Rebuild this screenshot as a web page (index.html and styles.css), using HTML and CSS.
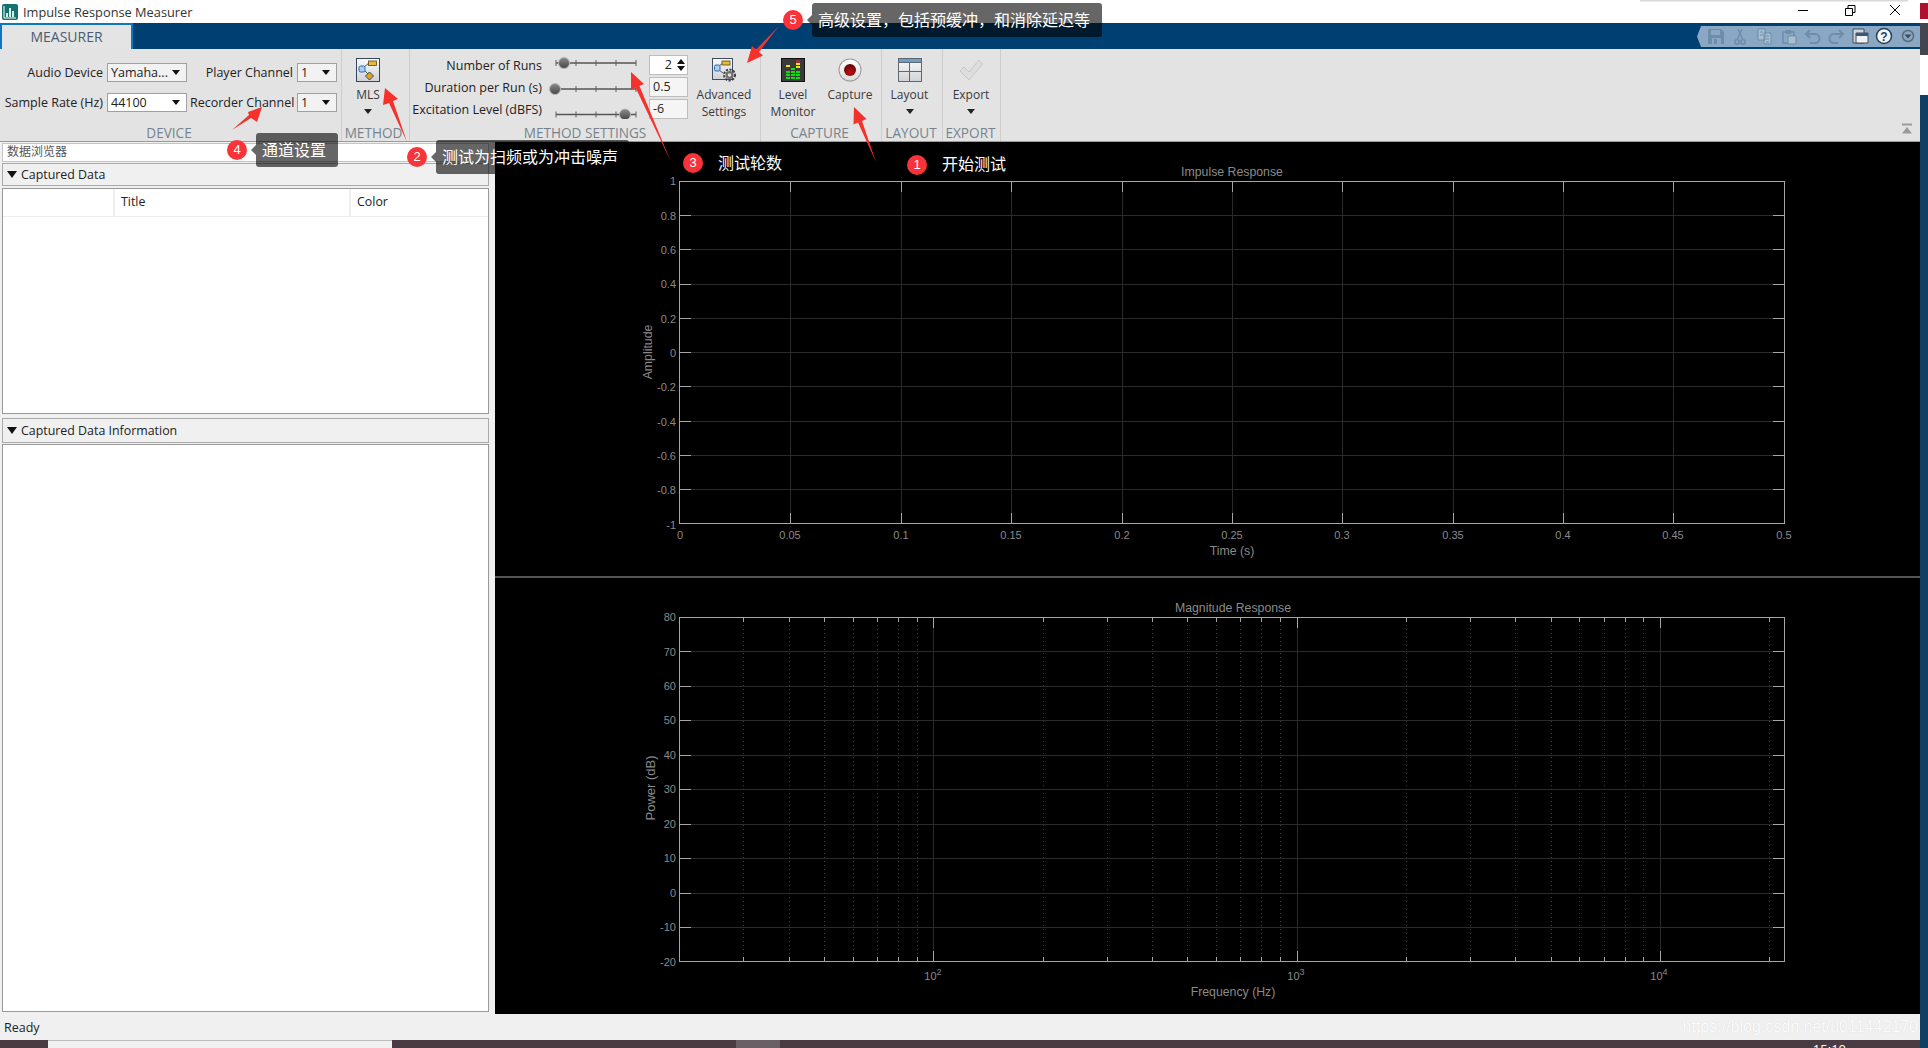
FILE: index.html
```html
<!DOCTYPE html>
<html lang="en">
<head>
  <meta charset="UTF-8" />
  <title>Impulse Response Measurer</title>
  <link rel="stylesheet" href="styles.css">
</head>
<body>
<div class="page">
  <div class="window">

    <div class="titlebar">
      <svg class="app-icon" viewBox="0 0 16 16">
        <rect width="16" height="16" rx="2" fill="#14736c"/>
        <path d="M2 2v12h12" fill="none" stroke="#fff"/>
        <path d="M4 13V9h2v4zM7 13V4h2v9zM10 13V7h2v6z" fill="#d8f0ec"/>
      </svg>
      <span class="app-title">Impulse Response Measurer</span>
      <div class="win-controls">
        <svg viewBox="0 0 46 23"><path d="M18 10.5h10" stroke="#000" fill="none"/></svg>
        <svg viewBox="0 0 46 23"><path d="M19.5 8.5h7v7h-7zM22 8V5.5h7v7h-2.500" stroke="#000" fill="none"/></svg>
        <svg viewBox="0 0 46 23"><path d="M18 5l10 10M28 5L18 15" stroke="#000" fill="none"/></svg>
      </div>
    </div>

    <div class="tabstrip">
      <div class="tab">MEASURER</div>
      <div class="quick-bar">
        <svg viewBox="1697 26 223 21" width="223" height="21">
          <path d="M1708 29h13l3 3v12h-16z" fill="#6d8dab"/>
          <path d="M1711 30h9v5h-9zM1712 38h9v6h-9z" fill="#8aa8c4"/>
          <path d="M1714 39h3v5h-3z" fill="#6d8dab"/>
          <g fill="none" stroke="#6d8dab" stroke-width="1.500">
            <path d="M1737 40l5-11M1743 40l-5-11"/>
            <circle cx="1737" cy="42" r="2.200"/><circle cx="1743" cy="42" r="2.200"/>
            <path d="M1783 32h11v11h-11z"/>
            <path d="M1810 30l-4 4 4 4M1806 34h9a4 4 0 0 1 0 9h-5" stroke-width="2"/>
            <path d="M1839 30l4 4-4 4M1843 34h-9a4 4 0 0 0 0 9h4" stroke-width="2"/>
          </g>
          <path d="M1758 29h7v11h-7zM1764 33h7v11h-7z" fill="#a9bed2" stroke="#6d8dab"/>
          <path d="M1760 32h3M1760 35h3M1766 36h3M1766 39h3M1766 42h3" stroke="#6d8dab" fill="none"/>
          <path d="M1786 30h5v4h-5z" fill="#6d8dab"/>
          <path d="M1788 36h8v8h-8z" fill="#a9bed2" stroke="#6d8dab"/>
          <path d="M1853 29h11v14h-11z" fill="#ccd6e0" stroke="#444c54"/>
          <path d="M1856 33h12v10h-12z" fill="#eef2f6" stroke="#444c54"/>
          <path d="M1856 33h12v3h-12z" fill="#39597a"/>
          <circle cx="1884" cy="36" r="7.500" fill="#f4f6fa" stroke="#24405f" stroke-width="1.500"/>
          <text x="1884" y="40.500" class="help-mark">?</text>
          <circle cx="1908" cy="36" r="5.500" fill="none" stroke="#5b6a78" stroke-width="1.500"/>
          <path d="M1904.500 34.500h7l-3.500 4z" fill="#3e4a56"/>
        </svg>
      </div>
    </div>

    <div class="ribbon">
      <div class="group group-device">
        <div class="device-grid">
          <span class="field-label">Audio Device</span>
          <div class="combo combo-grey">Yamaha...</div>
          <span class="field-label">Player Channel</span>
          <div class="combo combo-grey">1</div>
          <span class="field-label">Sample Rate (Hz)</span>
          <div class="combo">44100</div>
          <span class="field-label">Recorder Channel</span>
          <div class="combo combo-grey">1</div>
        </div>
        <div class="group-label">DEVICE</div>
      </div>

      <div class="group group-method">
        <div class="tall-row">
          <div class="tall-btn btn-mls">
            <svg class="tall-icon" viewBox="0 0 24 24">
              <defs>
                <linearGradient id="paperGrad" x1="0" y1="0" x2="0" y2="1">
                  <stop offset="0" stop-color="#fafafa"/><stop offset="1" stop-color="#cfd2d6"/>
                </linearGradient>
                <linearGradient id="thumbGrad" x1="0" y1="0" x2="0" y2="1">
                  <stop offset="0" stop-color="#8c8c8c"/><stop offset="1" stop-color="#454545"/>
                </linearGradient>
              </defs>
              <rect x=".5" y=".5" width="23" height="23" fill="url(#paperGrad)" stroke="#34465a"/>
              <path d="M8 9l5-4M8 12l5 5" stroke="#4e5a66" fill="none"/>
              <rect x="12.500" y="3" width="8" height="4.500" fill="#e9b935" stroke="#5a4a16" stroke-width=".8"/>
              <rect x="3" y="8" width="6" height="6" rx="1.500" fill="#a8cdf0" stroke="#2f6aa8"/>
              <path d="M13.500 14l4 4-4 4-4-4z" fill="#e6a21c" stroke="#2d4a66"/>
            </svg>
            <span class="tall-text">MLS</span>
            <span class="drop-arrow"></span>
          </div>
        </div>
        <div class="group-label">METHOD</div>
      </div>

      <div class="group group-settings">
        <div class="tall-row">
          <div class="settings-grid">
            <span class="field-label">Number of Runs</span>
            <svg class="slider" viewBox="0 0 107 20">
              <path class="slider-track" d="M14 8h80"/>
              <path class="slider-ticks" d="M14 5v6M34 5v6M54 5v6M74 5v6M94 5v6"/>
              <circle class="slider-thumb" cx="22" cy="8" r="5.500"/>
            </svg>
            <div class="spin-box">2<span class="spin-arrows"></span></div>

            <span class="field-label">Duration per Run (s)</span>
            <svg class="slider" viewBox="0 0 107 20">
              <path class="slider-track" d="M14 12h80"/>
              <path class="slider-ticks" d="M34 9v6M54 9v6M74 9v6M94 9v6"/>
              <circle class="slider-thumb" cx="13" cy="12" r="5.500"/>
            </svg>
            <div class="text-box">0.5</div>

            <span class="field-label">Excitation Level (dBFS)</span>
            <svg class="slider" viewBox="0 0 107 20">
              <path class="slider-track" d="M14 15.500h80"/>
              <path class="slider-ticks" d="M14 12.500v6M34 12.500v6M54 12.500v6M74 12.500v6M94 12.500v6"/>
              <circle class="slider-thumb" cx="83" cy="15.500" r="5.500"/>
            </svg>
            <div class="text-box">-6</div>
          </div>
          <div class="tall-btn btn-advanced">
            <svg class="tall-icon" viewBox="0 0 24 24">
              <rect x=".5" y=".5" width="20" height="21" fill="url(#paperGrad)" stroke="#3f4f60"/>
              <path d="M7 8l4-3M7 12l4 3" stroke="#4e5a66" fill="none"/>
              <rect x="10" y="3" width="8" height="4" fill="#e9b935" stroke="#5a4a16" stroke-width=".8"/>
              <rect x="2.500" y="7" width="5.500" height="6" rx="1.500" fill="#a8cdf0" stroke="#2f6aa8"/>
              <circle cx="17.500" cy="17" r="5.500" fill="none" stroke="#3f3f3f" stroke-width="2" stroke-dasharray="2.200 1.400"/>
              <circle cx="17.500" cy="17" r="4" fill="#6f6f6f"/>
              <circle cx="17.500" cy="17" r="1.800" fill="#e4e4e4"/>
            </svg>
            <span class="tall-text">Advanced</span>
            <span class="tall-text">Settings</span>
          </div>
        </div>
        <div class="group-label">METHOD SETTINGS</div>
      </div>

      <div class="group group-capture">
        <div class="tall-row">
          <div class="tall-btn btn-level">
            <svg class="tall-icon" viewBox="0 0 24 24">
              <rect x=".5" y=".5" width="23" height="23" fill="#3a3a3a" stroke="#111"/>
              <path d="M5 14h4M5 17h4M5 20h4M10 11h4M10 14h4M10 17h4M10 20h4M15 14h4M15 17h4M15 20h4" stroke="#0be00b" stroke-width="2.200" fill="none"/>
              <path d="M5 8h4M15 6h4M15 9h4" stroke="#f2e418" stroke-width="2.200" fill="none"/>
              <path d="M15 3.500h4" stroke="#e0201c" stroke-width="2.200" fill="none"/>
            </svg>
            <span class="tall-text">Level</span>
            <span class="tall-text">Monitor</span>
          </div>
          <div class="tall-btn btn-capture">
            <svg class="tall-icon" viewBox="0 0 24 24">
              <defs>
                <linearGradient id="capGrad" x1="0" y1="0" x2="0" y2="1">
                  <stop offset="0" stop-color="#ffffff"/><stop offset="1" stop-color="#dcdcdc"/>
                </linearGradient>
                <radialGradient id="capDot" cx=".5" cy=".7" r=".7">
                  <stop offset="0" stop-color="#c40f14"/><stop offset="1" stop-color="#5a0508"/>
                </radialGradient>
              </defs>
              <circle cx="12" cy="12" r="11.500" fill="#9a9a9a"/>
              <circle cx="12" cy="12" r="10.500" fill="url(#capGrad)"/>
              <circle cx="12" cy="12" r="6" fill="url(#capDot)"/>
            </svg>
            <span class="tall-text">Capture</span>
          </div>
        </div>
        <div class="group-label">CAPTURE</div>
      </div>

      <div class="group group-layout">
        <div class="tall-row">
          <div class="tall-btn btn-layout">
            <svg class="tall-icon" viewBox="0 0 24 24">
              <rect x=".5" y=".5" width="23" height="23" fill="url(#paperGrad)" stroke="#5f6870"/>
              <rect x="1" y="1" width="22" height="3.500" fill="#6d9fc6"/>
              <path d="M1 4.500h22M11.500 5v18M1 13.500h22" stroke="#5f6870" fill="none"/>
            </svg>
            <span class="tall-text">Layout</span>
            <span class="drop-arrow"></span>
          </div>
        </div>
        <div class="group-label">LAYOUT</div>
      </div>

      <div class="group group-export">
        <div class="tall-row">
          <div class="tall-btn btn-export">
            <svg class="tall-icon" viewBox="0 0 24 24">
              <path d="M1 13l4-4 5 5L20 2l3.500 4L10 22z" fill="#dedede" stroke="#c6c6c6"/>
            </svg>
            <span class="tall-text">Export</span>
            <span class="drop-arrow"></span>
          </div>
        </div>
        <div class="group-label">EXPORT</div>
      </div>

      <div class="ribbon-collapse">
        <svg viewBox="0 0 12 11" width="12" height="11"><path d="M1 .5h10v2H1zM6 4l5 6.500H1z" fill="#9b9b9b"/></svg>
      </div>
    </div>

    <div class="main">
      <div class="browser">
        <div class="browser-title">数据浏览器</div>
        <div class="section-head"><span class="section-arrow"></span>Captured Data</div>
        <div class="data-table">
          <div class="table-head">
            <div class="col col-blank"></div>
            <div class="col col-title">Title</div>
            <div class="col col-color">Color</div>
          </div>
        </div>
        <div class="section-head section-info"><span class="section-arrow"></span>Captured Data Information</div>
        <div class="info-panel"></div>
      </div>

      <div class="plots">
        <svg class="plot plot-top" viewBox="495 142 1425 434">
          <path class="grid" d="M790.500 181V524M901.500 181V524M1011.500 181V524M1122.500 181V524M1232.500 181V524M1342.500 181V524M1453.500 181V524M1563.500 181V524M1673.500 181V524M680 215.500H1784M680 249.500H1784M680 284.500H1784M680 318.500H1784M680 352.500H1784M680 386.500H1784M680 421.500H1784M680 455.500H1784M680 489.500H1784"/>
          <path class="tick" d="M790.500 181v11M901.500 181v11M1011.500 181v11M1122.500 181v11M1232.500 181v11M1342.500 181v11M1453.500 181v11M1563.500 181v11M1673.500 181v11M790.500 524v-11M901.500 524v-11M1011.500 524v-11M1122.500 524v-11M1232.500 524v-11M1342.500 524v-11M1453.500 524v-11M1563.500 524v-11M1673.500 524v-11M680 215.500h11M680 249.500h11M680 284.500h11M680 318.500h11M680 352.500h11M680 386.500h11M680 421.500h11M680 455.500h11M680 489.500h11M1784 215.500h-11M1784 249.500h-11M1784 284.500h-11M1784 318.500h-11M1784 352.500h-11M1784 386.500h-11M1784 421.500h-11M1784 455.500h-11M1784 489.500h-11"/>
          <rect class="axes" x="679.500" y="181.500" width="1105" height="342"/>
          <text class="plot-title" x="1232" y="176">Impulse Response</text>
          <g class="y-labels">
            <text x="676" y="185">1</text><text x="676" y="220">0.8</text><text x="676" y="254">0.6</text>
            <text x="676" y="288">0.4</text><text x="676" y="323">0.2</text><text x="676" y="357">0</text>
            <text x="676" y="391">-0.2</text><text x="676" y="426">-0.4</text><text x="676" y="460">-0.6</text>
            <text x="676" y="494">-0.8</text><text x="676" y="529">-1</text>
          </g>
          <g class="x-labels">
            <text x="680" y="539">0</text><text x="790" y="539">0.05</text><text x="901" y="539">0.1</text>
            <text x="1011" y="539">0.15</text><text x="1122" y="539">0.2</text><text x="1232" y="539">0.25</text>
            <text x="1342" y="539">0.3</text><text x="1453" y="539">0.35</text><text x="1563" y="539">0.4</text>
            <text x="1673" y="539">0.45</text><text x="1784" y="539">0.5</text>
          </g>
          <text class="axis-name" x="1232" y="555">Time (s)</text>
          <text class="axis-name" transform="translate(652 352) rotate(-90)">Amplitude</text>
        </svg>

        <div class="plot-divider"></div>

        <svg class="plot plot-bottom" viewBox="495 578 1425 436">
          <path class="grid" d="M933.500 617V962M1297.500 617V962M1660.500 617V962M680 651.500H1784M680 686.500H1784M680 720.500H1784M680 755.500H1784M680 789.500H1784M680 824.500H1784M680 858.500H1784M680 893.500H1784M680 927.500H1784"/>
          <path class="grid-minor" d="M743.500 617V962M789.500 617V962M824.500 617V962M853.500 617V962M877.500 617V962M898.500 617V962M917.500 617V962M1043.500 617V962M1107.500 617V962M1152.500 617V962M1187.500 617V962M1216.500 617V962M1240.500 617V962M1261.500 617V962M1280.500 617V962M1406.500 617V962M1470.500 617V962M1515.500 617V962M1551.500 617V962M1579.500 617V962M1604.500 617V962M1625.500 617V962M1643.500 617V962M1769.500 617V962"/>
          <path class="tick" d="M743.500 617v5M789.500 617v5M824.500 617v5M853.500 617v5M877.500 617v5M898.500 617v5M917.500 617v5M1043.500 617v5M1107.500 617v5M1152.500 617v5M1187.500 617v5M1216.500 617v5M1240.500 617v5M1261.500 617v5M1280.500 617v5M1406.500 617v5M1470.500 617v5M1515.500 617v5M1551.500 617v5M1579.500 617v5M1604.500 617v5M1625.500 617v5M1643.500 617v5M1769.500 617v5M743.500 962v-5M789.500 962v-5M824.500 962v-5M853.500 962v-5M877.500 962v-5M898.500 962v-5M917.500 962v-5M1043.500 962v-5M1107.500 962v-5M1152.500 962v-5M1187.500 962v-5M1216.500 962v-5M1240.500 962v-5M1261.500 962v-5M1280.500 962v-5M1406.500 962v-5M1470.500 962v-5M1515.500 962v-5M1551.500 962v-5M1579.500 962v-5M1604.500 962v-5M1625.500 962v-5M1643.500 962v-5M1769.500 962v-5M933.500 617v11M1297.500 617v11M1660.500 617v11M933.500 962v-11M1297.500 962v-11M1660.500 962v-11M680 651.500h11M680 686.500h11M680 720.500h11M680 755.500h11M680 789.500h11M680 824.500h11M680 858.500h11M680 893.500h11M680 927.500h11M1784 651.500h-11M1784 686.500h-11M1784 720.500h-11M1784 755.500h-11M1784 789.500h-11M1784 824.500h-11M1784 858.500h-11M1784 893.500h-11M1784 927.500h-11"/>
          <rect class="axes" x="679.500" y="617.500" width="1105" height="344"/>
          <text class="plot-title" x="1233" y="612">Magnitude Response</text>
          <g class="y-labels">
            <text x="676" y="621">80</text><text x="676" y="656">70</text><text x="676" y="690">60</text>
            <text x="676" y="724">50</text><text x="676" y="759">40</text><text x="676" y="793">30</text>
            <text x="676" y="828">20</text><text x="676" y="862">10</text><text x="676" y="897">0</text>
            <text x="676" y="931">-10</text><text x="676" y="966">-20</text>
          </g>
          <g class="x-labels">
            <text x="933" y="980">10<tspan class="exp" dy="-5">2</tspan></text>
            <text x="1296" y="980">10<tspan class="exp" dy="-5">3</tspan></text>
            <text x="1659" y="980">10<tspan class="exp" dy="-5">4</tspan></text>
          </g>
          <text class="axis-name" x="1233" y="996">Frequency (Hz)</text>
          <text class="axis-name axis-wide" transform="translate(655 788) rotate(-90)">Power (dB)</text>
        </svg>
      </div>
    </div>

    <div class="statusbar">
      <span class="status-text">Ready</span>
      <span class="watermark">https://blog.csdn.net/u011442170</span>
    </div>

    <div class="taskbar">
      <div class="task-gap-a"></div>
      <div class="task-search"></div>
      <div class="task-gap-b"></div>
      <div class="task-active"></div>
      <div class="task-clock">15:10</div>
    </div>
  </div>
  <div class="desktop-edge"></div>

  <!-- annotations drawn on top of the screenshot -->
  <svg class="arrows" viewBox="0 0 1928 1048">
    <polygon points="232,130 251,118 257,122 262,107 248,112 249,115"/>
    <polygon points="407,142 393,101 398,99 385,88 383,105 389,103"/>
    <polygon points="671,162 639.500,86 644,84 631,72 631,89.500 635.500,87.500"/>
    <polygon points="876,162 862,121 866.500,119 854,107 853.500,124.500 858,122.500"/>
    <polygon points="779,26 759,52 763,55.500 747,63 752,46 756,49.500"/>
  </svg>

  <div class="badge badge-1">1</div>
  <div class="note note-1">开始测试</div>
  <div class="badge badge-2">2</div>
  <div class="note note-2">测试为扫频或为冲击噪声</div>
  <div class="badge badge-3">3</div>
  <div class="note note-3">测试轮数</div>
  <div class="badge badge-4">4</div>
  <div class="note note-4">通道设置</div>
  <div class="badge badge-5">5</div>
  <div class="note note-5">高级设置，包括预缓冲，和消除延迟等</div>
</div>
</body>
</html>
```
FILE: styles.css
```css
* {
  box-sizing: border-box;
}
body {
  margin: 0;
  font-family: "Open Sans", "Noto Sans CJK SC", sans-serif;
  font-size: 12px;
  color: #222;
  overflow: hidden;
}
.page {
  position: relative;
  display: flex;
  width: 1928px;
  height: 1048px;
  overflow: hidden;
}
.window {
  display: flex;
  flex-direction: column;
  width: 1920px;
  height: 1048px;
  background-color: #f0f0f0;
}
.desktop-edge {
  width: 8px;
  background: linear-gradient(to bottom, #fff 0 3px, #b01030 3px 19px, #fff 19px 23px, #454550 23px 55px, #fff 55px 95px, #0f3f63 95px);
}

/* title bar */
.titlebar {
  position: relative;
  display: flex;
  align-items: center;
  height: 23px;
  background-color: #fff;
}
.titlebar::before {
  content: "";
  position: absolute;
  left: 1640px;
  top: 0;
  width: 268px;
  height: 2px;
  background: linear-gradient(to bottom, #d0d0d0, #f4f4f4);
}
.app-icon {
  width: 16px;
  height: 16px;
  margin-left: 2px;
}
.app-title {
  margin-left: 5px;
  font-size: 12.8px;
  color: #333;
}
.win-controls {
  display: flex;
  margin-left: auto;
  padding-right: 2px;
}
.win-controls svg {
  width: 46px;
  height: 23px;
}

/* tab strip */
.tabstrip {
  display: flex;
  align-items: flex-start;
  justify-content: space-between;
  height: 26px;
  background-color: #003f72;
}
.tab {
  width: 133px;
  height: 26px;
  padding-top: 1px;
  border: 2px solid #0d78c0;
  border-bottom: 0;
  background-color: #e4e4e4;
  color: #4b5b70;
  font-size: 14px;
  line-height: 21px;
  text-align: center;
}
.quick-bar {
  width: 223px;
  height: 21px;
  margin-top: 3px;
  background-color: #8aa8c4;
  clip-path: polygon(0 50%, 4px 0, 100% 0, 100% 100%, 4px 100%);
}
.quick-bar svg {
  display: block;
}
.help-mark {
  font-family: "Liberation Sans", sans-serif;
  font-size: 12px;
  font-weight: bold;
  fill: #24405f;
  text-anchor: middle;
}

/* ribbon */
.ribbon {
  display: flex;
  height: 93px;
  border-bottom: 1px solid #9a9a9a;
  background-color: #e3e3e3;
}
.group {
  position: relative;
  display: flex;
  flex-direction: column;
  justify-content: space-between;
  height: 92px;
  border-right: 1px solid #cdcdcd;
}
.group-device { width: 342px; }
.group-method { width: 68px; }
.group-settings { width: 351px; }
.group-capture { width: 121px; }
.group-layout { width: 61px; }
.group-export { width: 58px; }
.group-label {
  height: 16px;
  color: #76838f;
  font-size: 13.600px;
  line-height: 15px;
  text-align: center;
  white-space: nowrap;
}
.group-device .group-label { width: 338px; }
.group-method .group-label { padding-right: 4px; }
.group-capture .group-label { padding-right: 3px; }
.group-layout .group-label { padding-right: 2px; }
.group-export .group-label { padding-right: 2px; }
.device-grid {
  display: grid;
  grid-template-columns: 104px 80px 104px 40px;
  grid-auto-rows: 19px;
  column-gap: 3px;
  row-gap: 11px;
  padding-top: 14px;
}
.field-label {
  padding-right: 1px;
  font-size: 12.500px;
  line-height: 19px;
  text-align: right;
  white-space: nowrap;
}
.combo {
  position: relative;
  padding-left: 3px;
  border: 1px solid #a0a0a0;
  background-color: #fff;
  font-size: 12.500px;
  line-height: 17px;
}
.combo-grey {
  background-color: #f2f2f2;
}
.combo::after {
  content: "";
  position: absolute;
  right: 6px;
  top: 6px;
  border-top: 5px solid #111;
  border-left: 4px solid transparent;
  border-right: 4px solid transparent;
}
.tall-row {
  display: flex;
  padding-top: 9px;
}
.tall-btn {
  display: flex;
  flex-direction: column;
  align-items: center;
}
.tall-icon {
  display: block;
  width: 24px;
  height: 24px;
  margin-bottom: 4px;
}
.tall-text {
  height: 17px;
  color: #3a3a3a;
  font-size: 12px;
  line-height: 17px;
  white-space: nowrap;
}
.drop-arrow {
  width: 0;
  height: 0;
  margin-top: 6px;
  border-top: 5px solid #222;
  border-left: 4px solid transparent;
  border-right: 4px solid transparent;
}
.btn-mls { width: 52px; }
.btn-advanced { width: 72px; }
.btn-level { width: 64px; }
.btn-capture { width: 50px; }
.btn-layout { width: 55px; }
.btn-export { width: 56px; }
.settings-grid {
  display: grid;
  grid-template-columns: 133px 106px 39px;
  grid-auto-rows: 20px;
  row-gap: 2px;
  margin-top: -3px;
}
.settings-grid .field-label {
  line-height: 21px;
}
.slider {
  display: block;
  width: 107px;
  height: 20px;
  margin-left: -1px;
}
.slider-track {
  stroke: #555;
  stroke-width: 1.500;
  fill: none;
}
.slider-ticks {
  stroke: #5f5f5f;
  fill: none;
}
.slider-thumb {
  fill: url(#thumbGrad);
  stroke: #b9b9b9;
}
.text-box,
.spin-box {
  position: relative;
  padding-left: 3px;
  border: 1px solid #bdbdbd;
  background-color: #f5f5f5;
  font-size: 12.500px;
  line-height: 18px;
}
.spin-box {
  padding-right: 15px;
  background-color: #fff;
  text-align: right;
}
.spin-arrows::before,
.spin-arrows::after {
  content: "";
  position: absolute;
  right: 2px;
  border-left: 4px solid transparent;
  border-right: 4px solid transparent;
}
.spin-arrows::before {
  top: 3px;
  border-bottom: 5px solid #111;
}
.spin-arrows::after {
  bottom: 3px;
  border-top: 5px solid #111;
}
.ribbon-collapse {
  align-self: flex-end;
  margin-left: auto;
  margin-right: 7px;
  margin-bottom: 7px;
  line-height: 0;
}

/* main area */
.main {
  display: flex;
  height: 872px;
}
.browser {
  display: flex;
  flex-direction: column;
  width: 495px;
  padding: 1px 6px 2px 2px;
}
.browser-title {
  height: 19px;
  padding-left: 4px;
  border: 1px solid #c4c4c4;
  background-color: #fff;
  color: #555;
  font-size: 12px;
  line-height: 16px;
}
.section-head {
  display: flex;
  align-items: center;
  height: 23px;
  margin-top: 1px;
  border: 1px solid #aaa;
  background-color: #f0f0f0;
  font-size: 12.400px;
}
.section-info {
  height: 25px;
  margin-top: 4px;
}
.section-arrow {
  width: 0;
  height: 0;
  margin: 0 4px 0 4px;
  border-top: 7px solid #111;
  border-left: 5px solid transparent;
  border-right: 5px solid transparent;
}
.data-table {
  height: 226px;
  margin-top: 2px;
  border: 1px solid #999;
  background-color: #fff;
}
.table-head {
  display: flex;
  height: 28px;
  border-bottom: 1px solid #eee;
  font-size: 12.400px;
  line-height: 25px;
}
.col {
  height: 27px;
}
.col-blank { width: 112px; border-right: 2px solid #eee; }
.col-title { width: 236px; padding-left: 6px; border-right: 2px solid #eee; }
.col-color { padding-left: 6px; }
.info-panel {
  flex: 1;
  margin-top: 1px;
  border: 1px solid #999;
  background-color: #fff;
}

/* plots */
.plots {
  display: flex;
  flex-direction: column;
  width: 1425px;
  background-color: #000;
}
.plot {
  display: block;
  width: 1425px;
}
.plot-top { height: 434px; }
.plot-bottom { height: 436px; }
.plot-divider {
  height: 2px;
  background-color: #555;
}
.axes {
  fill: none;
  stroke: #a6a6a6;
}
.grid {
  fill: none;
  stroke: #2a2a2a;
}
.grid-minor {
  fill: none;
  stroke: #3a3a3a;
  stroke-dasharray: 1 3;
}
.tick {
  fill: none;
  stroke: #a6a6a6;
}
.plot text {
  font-family: "Liberation Sans", sans-serif;
  font-size: 11px;
  fill: #8a8a8a;
}
.plot .plot-title,
.plot .axis-name {
  font-size: 12.300px;
  text-anchor: middle;
}
.plot .axis-wide {
  font-size: 13px;
}
.y-labels text {
  text-anchor: end;
}
.x-labels text {
  text-anchor: middle;
}
.plot .exp {
  font-size: 9px;
}

/* status + taskbar */
.statusbar {
  display: flex;
  align-items: center;
  justify-content: space-between;
  height: 26px;
  padding-left: 4px;
  background-color: #f0f0f0;
}
.status-text {
  font-size: 12.500px;
}
.watermark {
  margin-right: 2px;
  color: #fbfbfb;
  font-family: "Liberation Sans", sans-serif;
  font-size: 16px;
  text-shadow: 0 0 1px rgba(0, 0, 0, 0.12);
}
.taskbar {
  display: flex;
  height: 8px;
  overflow: hidden;
  background-color: #4a3a42;
}
.task-gap-a { width: 48px; }
.task-search {
  width: 344px;
  border-top: 1px solid #bbb;
  background-color: #f0f0f0;
}
.task-gap-b { width: 344px; }
.task-active {
  width: 44px;
  background-color: #6a5f64;
}
.task-clock {
  margin-left: auto;
  margin-right: 74px;
  padding-top: 3px;
  color: #fff;
  font-size: 13px;
  line-height: 13px;
}

/* annotations */
.arrows {
  position: absolute;
  left: 0;
  top: 0;
  width: 1928px;
  height: 1048px;
  pointer-events: none;
}
.arrows polygon {
  fill: #f5312c;
}
.badge {
  position: absolute;
  width: 20px;
  height: 20px;
  border-radius: 50%;
  background-color: #f8343a;
  color: #fff;
  font-family: "Liberation Sans", sans-serif;
  font-size: 13px;
  line-height: 20px;
  text-align: center;
}
.note {
  position: absolute;
  height: 34px;
  padding: 0 6px;
  border-radius: 3px;
  background-color: rgba(0, 0, 0, 0.6);
  color: #fff;
  font-family: "Noto Sans CJK SC", sans-serif;
  font-size: 16px;
  line-height: 33px;
  white-space: nowrap;
}
.note::before {
  content: "";
  position: absolute;
  left: -5px;
  top: 12px;
  border-top: 5px solid transparent;
  border-bottom: 5px solid transparent;
  border-right: 5px solid rgba(0, 0, 0, 0.6);
}
.badge-1 { left: 907px; top: 155px; }
.note-1 { left: 936px; top: 147px; }
.badge-2 { left: 407px; top: 147px; }
.note-2 { left: 436px; top: 140px; width: 193px; }
.badge-3 { left: 683px; top: 153px; }
.note-3 { left: 712px; top: 146px; }
.badge-4 { left: 227px; top: 140px; }
.note-4 { left: 256px; top: 133px; width: 82px; }
.badge-5 { left: 783px; top: 10px; }
.note-5 { left: 812px; top: 3px; width: 290px; }
```
